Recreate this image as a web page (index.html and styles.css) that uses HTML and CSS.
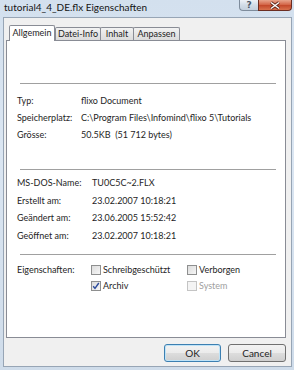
FILE: index.html
```html
<!DOCTYPE html>
<html lang="de">
<head>
  <meta charset="UTF-8" />
  <title>tutorial4_4_DE.flx Eigenschaften</title>
  <link rel="stylesheet" href="styles.css">
</head>
<body>
  <div class="window">
    <div class="titlebar">
      <span class="title">tutorial4_4_DE.flx Eigenschaften</span>
      <div class="caption-buttons">
        <span class="cap help">?</span>
        <span class="cap close">
          <svg viewBox="0 0 12 9" width="12" height="9">
            <path d="M2 1.5l8 6M10 1.5l-8 6" stroke="#5a2418" stroke-width="3" fill="none"></path>
            <path d="M2 1.5l8 6M10 1.5l-8 6" stroke="#ffffff" stroke-width="1.4" fill="none"></path>
          </svg>
        </span>
      </div>
    </div>

    <div class="client">
      <div class="tabs">
        <span class="tab active">Allgemein</span>
        <span class="tab tab-info">Datei-Info</span>
        <span class="tab tab-inhalt">Inhalt</span>
        <span class="tab tab-anpassen">Anpassen</span>
      </div>

      <div class="panel">
        <div class="head"></div>
        <div class="sep"></div>

        <div class="rows rows-file">
          <span>Typ:</span><span>flixo Document</span>
          <span>Speicherplatz:</span><span>C:\Program Files\Infomind\flixo 5\Tutorials</span>
          <span>Grösse:</span><span>50.5KB &nbsp;(51 712 bytes)</span>
        </div>

        <div class="sep sep-2"></div>

        <div class="rows rows-dates">
          <span>MS-DOS-Name:</span><span>TU0C5C~2.FLX</span>
          <span>Erstellt am:</span><span>23.02.2007 10:18:21</span>
          <span>Geändert am:</span><span>23.06.2005 15:52:42</span>
          <span>Geöffnet am:</span><span>23.02.2007 10:18:21</span>
        </div>

        <div class="sep sep-3"></div>

        <div class="attrs">
          <span>Eigenschaften:</span>
          <label class="check"><span class="cb"></span>Schreibgeschützt</label>
          <label class="check"><span class="cb"></span>Verborgen</label>
          <span></span>
          <label class="check">
            <span class="cb checked">
              <svg viewBox="0 0 8 8" width="8" height="8">
                <path d="M1.2 4.2l1.8 2.2 3.8-5.4" stroke="#2b4a9c" stroke-width="1.4" fill="none"></path>
              </svg>
            </span>Archiv
          </label>
          <label class="check disabled"><span class="cb"></span>System</label>
        </div>
      </div>

      <div class="buttons">
        <button class="btn default">OK</button>
        <button class="btn">Cancel</button>
      </div>
    </div>
  </div>
</body>
</html>
```

FILE: styles.css
```css
body {
  margin: 0;
  font-family: Lato, "Liberation Sans", sans-serif;
  font-size: 9px;
  color: #1e1e1e;
  background: linear-gradient(#d3e0ee, #dbe6f2 40%, #cfdcea);
}
.window {
  height: 370px;
  display: flex;
  flex-direction: column;
}
.titlebar {
  height: 17px;
  display: flex;
  justify-content: space-between;
  padding-left: 4px;
}
.title {
  font-size: 10px;
  line-height: 15px;
  color: #141414;
}
.caption-buttons {
  display: flex;
  align-self: flex-start;
  margin-right: 2px;
}
.cap {
  height: 11px;
  box-sizing: border-box;
  display: flex;
  align-items: center;
  justify-content: center;
}
.help {
  width: 19px;
  border: 1px solid #7e8c9c;
  border-top: none;
  border-right: none;
  border-radius: 0 0 0 4px;
  background: linear-gradient(#eef2f7, #d2dce7 50%, #c4d0dd);
  color: #4b5866;
  font-family: "DejaVu Sans", sans-serif;
  font-size: 9px;
  font-weight: bold;
}
.close {
  width: 34px;
  border: 1px solid #6b2d22;
  border-top: none;
  border-radius: 0 0 4px 0;
  background: linear-gradient(#e8a48c, #d4684a 45%, #c44a2c 55%, #d8704c);
}
.close svg {
  display: block;
}

.client {
  flex: 1;
  margin: 0 2px 3px 3px;
  border: 1px solid #97a5b5;
  background: #f0f0f0;
  display: flex;
  flex-direction: column;
  padding: 7px 5px 4px 2px;
}
.tabs {
  height: 15px;
  display: flex;
  align-items: flex-end;
  position: relative;
  z-index: 1;
}
.tab {
  box-sizing: border-box;
  height: 13px;
  border: 1px solid #898c95;
  border-bottom: none;
  border-radius: 2px 2px 0 0;
  background: linear-gradient(#f3f3f3, #e6e6e6 50%, #dcdcdc);
  text-align: center;
  white-space: nowrap;
  line-height: 12px;
  color: #1e1e1e;
}
.tab.active {
  height: 16px;
  margin-bottom: -1px;
  margin-left: 3px;
  width: 46px;
  background: #ffffff;
  line-height: 14px;
}
.tab-info {
  width: 46px;
}
.tab-inhalt {
  width: 34px;
  margin-left: -1px;
}
.tab-anpassen {
  width: 47px;
  margin-left: -1px;
}

.panel {
  flex: 1;
  background: #ffffff;
  border: 1px solid #898c95;
  padding: 0 9px 0 10px;
}
.head {
  height: 42px;
}
.sep {
  height: 1px;
  margin-left: 3px;
  background: #a0a0a0;
}
.sep-2 {
  margin-top: 26px;
}
.sep-3 {
  margin-top: 10px;
}
.rows {
  display: grid;
  white-space: nowrap;
}
.rows-file {
  margin-top: 8px;
  grid-template-columns: 64px auto;
  line-height: 17px;
}
.rows-dates {
  margin-top: 4px;
  grid-template-columns: 75px auto;
  line-height: 17.5px;
}
.attrs {
  margin-top: 7px;
  display: grid;
  grid-template-columns: 74px 96px auto;
  line-height: 16px;
}
.check {
  display: flex;
  align-items: center;
  gap: 2px;
}
.cb {
  box-sizing: border-box;
  width: 10px;
  height: 10px;
  border: 1px solid #8e8f8f;
  background: linear-gradient(135deg, #dcdcdc, #f6f6f6);
  display: flex;
  align-items: center;
  justify-content: center;
}
.cb svg {
  display: block;
}
.check.disabled {
  color: #a0a0a0;
}
.check.disabled .cb {
  border-color: #c4c4c4;
  background: #f4f4f4;
}

.buttons {
  margin-top: 6px;
  display: flex;
  justify-content: flex-end;
  gap: 7px;
}
.btn {
  box-sizing: border-box;
  width: 58px;
  height: 18px;
  padding: 0;
  font-family: inherit;
  font-size: 10px;
  color: #1e1e1e;
  border: 1px solid #707070;
  border-radius: 3px;
  background: linear-gradient(#f2f2f2, #ebebeb 50%, #dddddd 50%, #cfcfcf);
}
.btn.default {
  width: 57px;
  border-color: #3c7fb1;
  box-shadow: inset 0 0 0 1px #bfe3f7;
}
```
